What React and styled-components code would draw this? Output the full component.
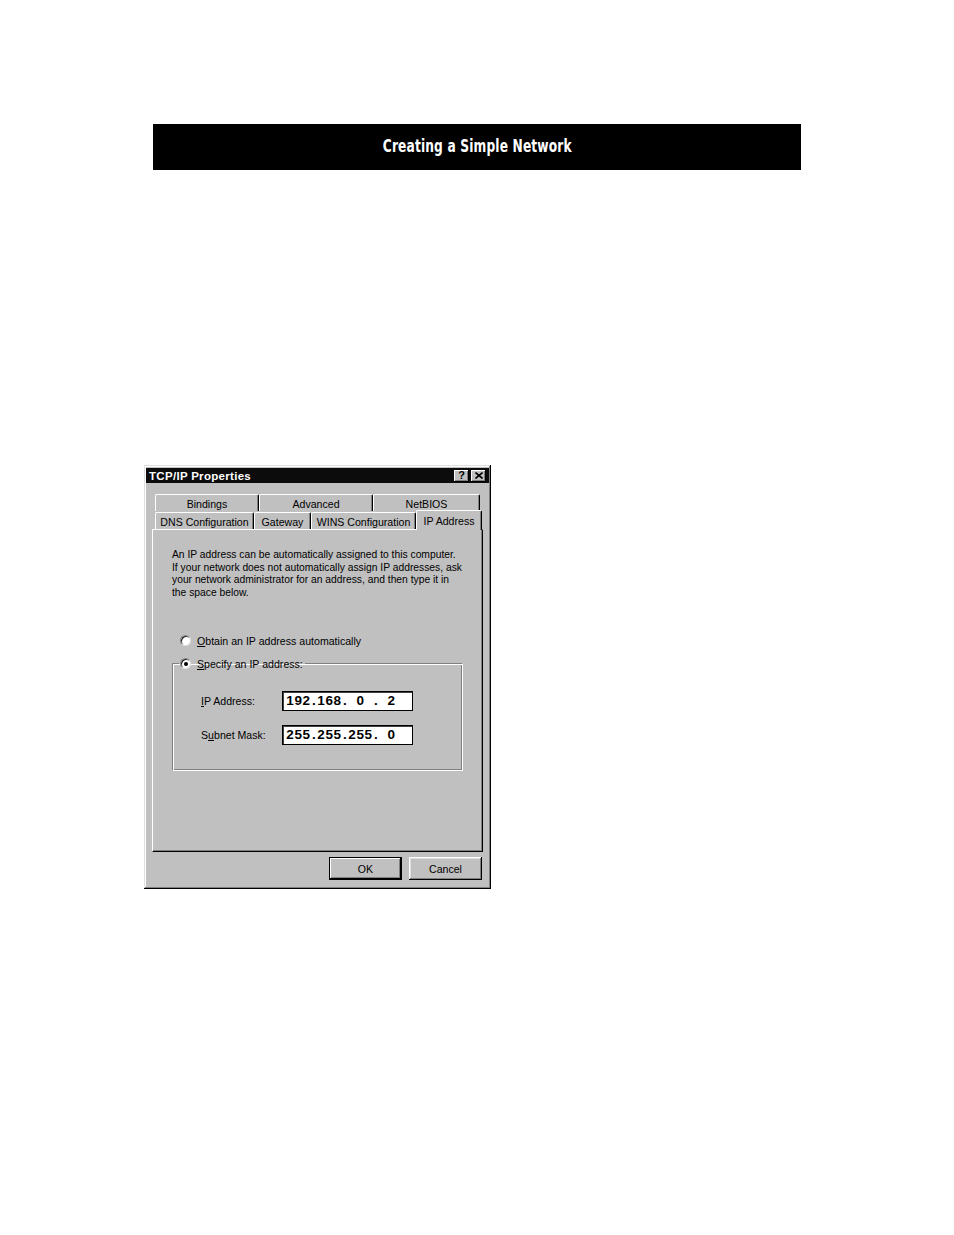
import React from 'react';
import styled, { createGlobalStyle } from 'styled-components';

const GlobalStyle = createGlobalStyle`
  html, body {
    margin: 0;
    padding: 0;
    background: #ffffff;
  }
  body {
    width: 954px;
    height: 1235px;
    font-family: "Liberation Sans", Arial, sans-serif;
  }
`;

const Page = styled.div`
  display: flex;
  flex-direction: column;
  padding-top: 124px;
`;

const HeaderBar = styled.div`
  display: flex;
  align-items: center;
  justify-content: center;
  margin-left: 153px;
  width: 648px;
  height: 46px;
  background: #000000;
`;

const HeaderTitle = styled.h1`
  margin: 0 0 3px 0;
  color: #ffffff;
  font-family: "DejaVu Sans", sans-serif;
  font-weight: bold;
  font-size: 17px;
  letter-spacing: 0.2px;
  transform: scaleX(0.72);
`;

const Dialog = styled.div`
  display: flex;
  flex-direction: column;
  margin-top: 295px;
  margin-left: 144px;
  width: 347px;
  height: 424px;
  box-sizing: border-box;
  padding: 3px 2px 0 2px;
  background: #c0c0c0;
  box-shadow: inset -1px -1px 0 #000000, inset 1px 1px 0 #dfdfdf,
    inset -2px -2px 0 #808080, inset 2px 2px 0 #ffffff;
`;

const TitleBar = styled.div`
  display: flex;
  align-items: center;
  justify-content: space-between;
  height: 15px;
  padding: 0 3px 0 3px;
  background: #0c0c0c;
`;

const TitleText = styled.span`
  color: #ffffff;
  font-weight: bold;
  font-size: 11.5px;
  letter-spacing: 0.3px;
`;

const TitleButtons = styled.div`
  display: flex;
  gap: 2px;
`;

const TitleButton = styled.div`
  display: flex;
  align-items: center;
  justify-content: center;
  width: 15px;
  height: 12px;
  box-sizing: border-box;
  background: #c0c0c0;
  box-shadow: inset -1px -1px 0 #000000, inset 1px 1px 0 #ffffff,
    inset -2px -2px 0 #808080;
  font-weight: bold;
  font-size: 11px;
  line-height: 1;
  color: #000000;
`;

const TabArea = styled.div`
  display: flex;
  flex-direction: column;
  margin: 11px 0 0 9px;
`;

const TabRow = styled.div`
  display: flex;
  height: ${(p) => p.$h}px;
  align-items: flex-end;
`;

const Tab = styled.div`
  position: relative;
  display: flex;
  align-items: center;
  justify-content: center;
  width: ${(p) => p.$w}px;
  height: ${(p) => (p.$active ? 20 : 17)}px;
  box-sizing: border-box;
  font-size: 10.6px;
  color: #000000;
  background: #c0c0c0;
  border-top: 1px solid #ffffff;
  border-left: 1px solid #ffffff;
  border-right: 1px solid #000000;
  box-shadow: inset -1px 0 0 #808080;
  border-radius: 2px 2px 0 0;
  padding-top: ${(p) => (p.$active ? 0 : 1)}px;
  margin-bottom: ${(p) => (p.$active ? -1 : 0)}px;
  z-index: ${(p) => (p.$active ? 2 : 1)};
`;

const Panel = styled.div`
  display: flex;
  flex-direction: column;
  margin-left: -3px;
  width: 331px;
  height: 323px;
  box-sizing: border-box;
  padding: 19px 0 0 19px;
  background: #c0c0c0;
  border-top: 1px solid #ffffff;
  border-left: 1px solid #ffffff;
  border-right: 1px solid #000000;
  border-bottom: 1px solid #000000;
  box-shadow: inset -1px -1px 0 #808080;
`;

const Paragraph = styled.p`
  margin: 0;
  font-size: 10.3px;
  line-height: 12.7px;
  color: #000000;
  white-space: nowrap;
`;

const RadioRow = styled.label`
  display: flex;
  align-items: center;
  gap: 6px;
  font-size: 10.6px;
  color: #000000;
`;

const Radio = styled.span`
  position: relative;
  display: inline-block;
  width: 11px;
  height: 11px;
  box-sizing: border-box;
  border-radius: 50%;
  background: #ffffff;
  border-top: 1px solid #808080;
  border-left: 1px solid #808080;
  border-right: 1px solid #e0e0e0;
  border-bottom: 1px solid #e0e0e0;
  box-shadow: inset 1px 1px 0 #202020;

  &::after {
    content: '';
    display: ${(p) => (p.$checked ? 'block' : 'none')};
    position: absolute;
    left: 2.5px;
    top: 2.5px;
    width: 4px;
    height: 4px;
    border-radius: 50%;
    background: #000000;
  }
`;

const FirstRadio = styled.div`
  margin: 35px 0 0 8px;
`;

const GroupBox = styled.fieldset`
  margin: 11px 0 0 0;
  padding: 21px 0 0 0;
  width: 291px;
  height: 113px;
  box-sizing: border-box;
  border: none;
  border-top: 1px solid #808080;
  border-left: 1px solid #808080;
  border-right: 1px solid #ffffff;
  border-bottom: 1px solid #ffffff;
  box-shadow: inset 1px 1px 0 #ffffff, inset -1px -1px 0 #808080;
  display: flex;
  flex-direction: column;
  gap: 14px;
`;

const Legend = styled.legend`
  margin-left: 6px;
  padding: 0 2px 0 1px;
`;

const FieldRow = styled.div`
  display: flex;
  align-items: center;
  margin-left: 28px;
`;

const FieldLabel = styled.span`
  width: 81px;
  font-size: 10.6px;
  color: #000000;
`;

const Underline = styled.span`
  text-decoration: underline;
`;

const IpBox = styled.div`
  display: flex;
  align-items: center;
  width: 131px;
  height: 20px;
  box-sizing: border-box;
  padding-left: 2px;
  background: #ffffff;
  border: 1px solid #000000;
  box-shadow: inset 1px 1px 0 #404040;
  font-family: "Liberation Sans", Arial, sans-serif;
  font-weight: bold;
  font-size: 13.5px;
  color: #000000;
`;

const IpSegment = styled.span`
  width: 27px;
  text-align: center;
  letter-spacing: 0.6px;
`;

const IpDot = styled.span`
  width: 4px;
  text-align: center;
`;

const ButtonRow = styled.div`
  display: flex;
  justify-content: flex-end;
  gap: 7px;
  margin: 5px 7px 0 0;
`;

const Button = styled.div`
  display: flex;
  align-items: center;
  justify-content: center;
  width: 73px;
  height: 23px;
  box-sizing: border-box;
  font-size: 10.6px;
  color: #000000;
  background: #c0c0c0;
  border: ${(p) => (p.$default ? '1px solid #000000' : 'none')};
  box-shadow: ${(p) =>
    p.$default
      ? 'inset -1px -1px 0 #000000, inset 1px 1px 0 #ffffff, inset -2px -2px 0 #808080'
      : 'inset -1px -1px 0 #000000, inset 1px 1px 0 #ffffff, inset -2px -2px 0 #808080, inset 2px 2px 0 #dfdfdf'};
`;

const IpField = ({ parts }) => (
  <IpBox>
    {parts.map((part, i) => (
      <React.Fragment key={i}>
        <IpSegment>{part}</IpSegment>
        {i < parts.length - 1 && <IpDot>.</IpDot>}
      </React.Fragment>
    ))}
  </IpBox>
);

const App = () => (
  <Page>
    <GlobalStyle />
    <HeaderBar>
      <HeaderTitle>Creating a Simple Network</HeaderTitle>
    </HeaderBar>

    <Dialog>
      <TitleBar>
        <TitleText>TCP/IP Properties</TitleText>
        <TitleButtons>
          <TitleButton>?</TitleButton>
          <TitleButton>
            <svg width="8" height="7" viewBox="0 0 8 7">
              <path d="M0.5 0.5 L7.5 6.5 M7.5 0.5 L0.5 6.5" stroke="#000" strokeWidth="1.6" />
            </svg>
          </TitleButton>
        </TitleButtons>
      </TitleBar>

      <TabArea>
        <TabRow $h={17}>
          <Tab $w={104}>Bindings</Tab>
          <Tab $w={114}>Advanced</Tab>
          <Tab $w={107}>NetBIOS</Tab>
        </TabRow>
        <TabRow $h={18}>
          <Tab $w={99}>DNS Configuration</Tab>
          <Tab $w={57}>Gateway</Tab>
          <Tab $w={105}>WINS Configuration</Tab>
          <Tab $w={66} $active>IP Address</Tab>
        </TabRow>
        <Panel>
          <Paragraph>
            An IP address can be automatically assigned to this computer.<br />
            If your network does not automatically assign IP addresses, ask<br />
            your network administrator for an address, and then type it in<br />
            the space below.
          </Paragraph>

          <FirstRadio>
            <RadioRow>
              <Radio />
              <span><Underline>O</Underline>btain an IP address automatically</span>
            </RadioRow>
          </FirstRadio>

          <GroupBox>
            <Legend>
              <RadioRow>
                <Radio $checked />
                <span><Underline>S</Underline>pecify an IP address:</span>
              </RadioRow>
            </Legend>
            <FieldRow>
              <FieldLabel><Underline>I</Underline>P Address:</FieldLabel>
              <IpField parts={['192', '168', '0', '2']} />
            </FieldRow>
            <FieldRow>
              <FieldLabel>S<Underline>u</Underline>bnet Mask:</FieldLabel>
              <IpField parts={['255', '255', '255', '0']} />
            </FieldRow>
          </GroupBox>
        </Panel>
      </TabArea>

      <ButtonRow>
        <Button $default>OK</Button>
        <Button>Cancel</Button>
      </ButtonRow>
    </Dialog>
  </Page>
);

export default App;
